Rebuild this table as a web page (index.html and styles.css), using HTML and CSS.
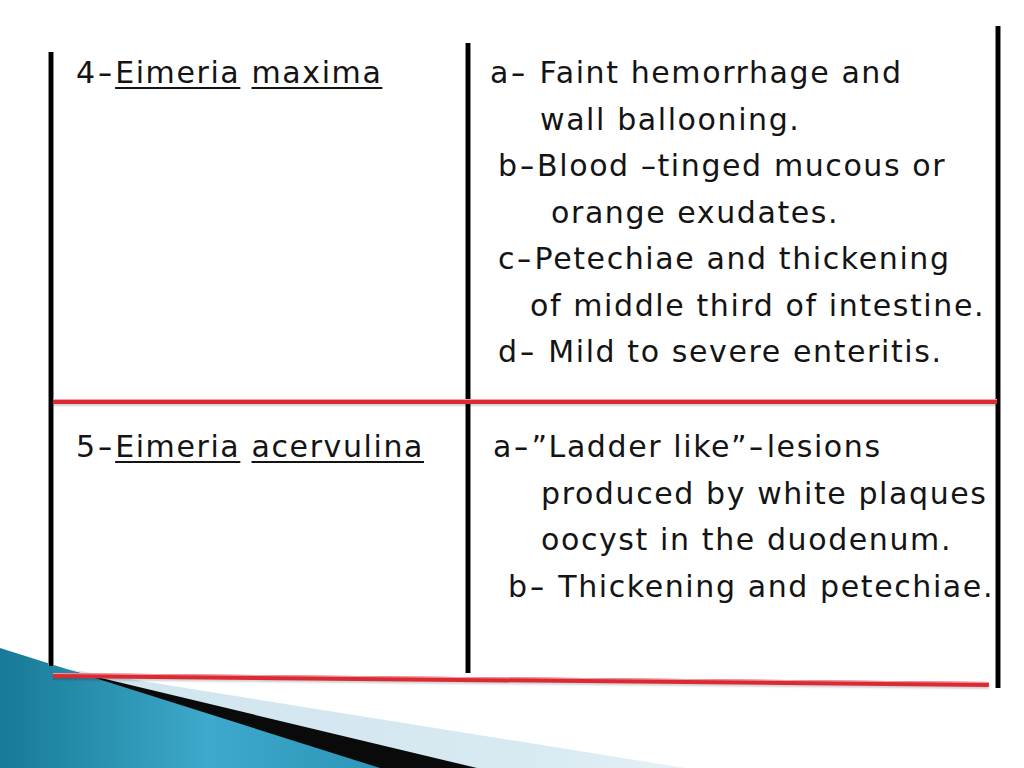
FILE: index.html
```html
<!DOCTYPE html>
<html>
<head>
<meta charset="utf-8">
<link rel="stylesheet" href="styles.css">
</head>
<body>
<div class="slide">
  <svg class="corner" width="1024" height="768" viewBox="0 0 1024 768">
    <defs>
      <linearGradient id="teal" x1="0" y1="0" x2="1" y2="0">
        <stop offset="0" stop-color="#177a96"/>
        <stop offset="0.55" stop-color="#3ea9cc"/>
        <stop offset="1" stop-color="#2c95b8"/>
      </linearGradient>
      <linearGradient id="pale" x1="0" y1="0" x2="1" y2="0">
        <stop offset="0" stop-color="#cfe4ee"/>
        <stop offset="0.8" stop-color="#d8eaf2"/>
        <stop offset="1" stop-color="#e6f1f6"/>
      </linearGradient>
    </defs>
    <polygon points="55,667 685,768 0,768" fill="url(#pale)"/>
    <polygon points="55,667 477,768 0,768" fill="#0a0a0a"/>
    <polygon points="0,648 380,768 0,768" fill="url(#teal)"/>
  </svg>

  <div class="row row1">
    <div class="cell-left"><span>4</span><span class="hy">-</span><u>Eimeria</u> <u>maxima</u></div>
    <div class="cell-right">
      <div class="ln o0">a<span class="hy">-</span> Faint hemorrhage and</div>
      <div class="ln o50">wall ballooning.</div>
      <div class="ln o8">b<span class="hy">-</span>Blood –tinged mucous or</div>
      <div class="ln o61">orange exudates.</div>
      <div class="ln o8">c<span class="hy">-</span>Petechiae and thickening</div>
      <div class="ln o40">of middle third of intestine.</div>
      <div class="ln o8">d<span class="hy">-</span> Mild to severe enteritis.</div>
    </div>
  </div>
  <div class="row row2">
    <div class="cell-left"><span>5</span><span class="hy">-</span><u>Eimeria</u> <u>acervulina</u></div>
    <div class="cell-right">
      <div class="ln o3">a<span class="hy">-</span>”Ladder like”<span class="hy">-</span>lesions</div>
      <div class="ln o51">produced by white plaques</div>
      <div class="ln o51">oocyst in the duodenum.</div>
      <div class="ln o18">b<span class="hy">-</span> Thickening and petechiae.</div>
    </div>
  </div>

  <div class="vline v-left"></div>
  <div class="vline v-mid"></div>
  <div class="vline v-right"></div>
  <div class="hline h-mid"></div>
  <div class="hline h-bottom"></div>
</div>
</body>
</html>
```
FILE: styles.css
```css
html, body {
  margin: 0;
  padding: 0;
  background: #ffffff;
}
.slide {
  position: relative;
  width: 1024px;
  height: 768px;
  overflow: hidden;
  background: #ffffff;
  font-family: "DejaVu Sans", "Liberation Sans", sans-serif;
  font-size: 30px;
  letter-spacing: 1.6px;
  color: #141414;
}
.row {
  position: relative;
  display: grid;
  grid-template-columns: 414px 1fr;
  padding-left: 76px;
  line-height: 46.5px;
}
.row1 {
  padding-top: 50px;
  height: 424px;
  box-sizing: border-box;
}
.hy {
  display: inline-block;
  margin: 0 3px;
  transform: scaleX(1.4);
}
.cell-left u {
  text-decoration-thickness: 2px;
  text-underline-offset: 4px;
}
.ln { white-space: nowrap; }
.o0 { padding-left: 0; }
.o3 { padding-left: 3px; }
.o8 { padding-left: 8px; }
.o18 { padding-left: 18px; }
.o40 { padding-left: 40px; }
.o50 { padding-left: 50px; }
.o51 { padding-left: 51px; }
.o61 { padding-left: 61px; }

.vline {
  position: absolute;
  width: 4px;
  background: #000;
  box-shadow: -1px 0 0 #888, 1px 0 0 #888;
}
.v-left { left: 49px; top: 52px; height: 614px; }
.v-mid { left: 466px; top: 43px; height: 630px; }
.v-right { left: 996px; top: 26px; height: 662px; }

.hline {
  position: absolute;
  height: 4px;
  background: #dc2a33;
  border-top: 1px solid #f0a0a5;
  box-shadow: 0 2px 2px rgba(0,0,0,0.18);
}
.h-mid { left: 53px; top: 399px; width: 944px; }
.h-bottom {
  left: 53px;
  top: 673px;
  width: 936px;
  transform-origin: 0 0;
  transform: rotate(0.55deg);
}
.corner {
  position: absolute;
  left: 0;
  top: 0;
  pointer-events: none;
}
```
